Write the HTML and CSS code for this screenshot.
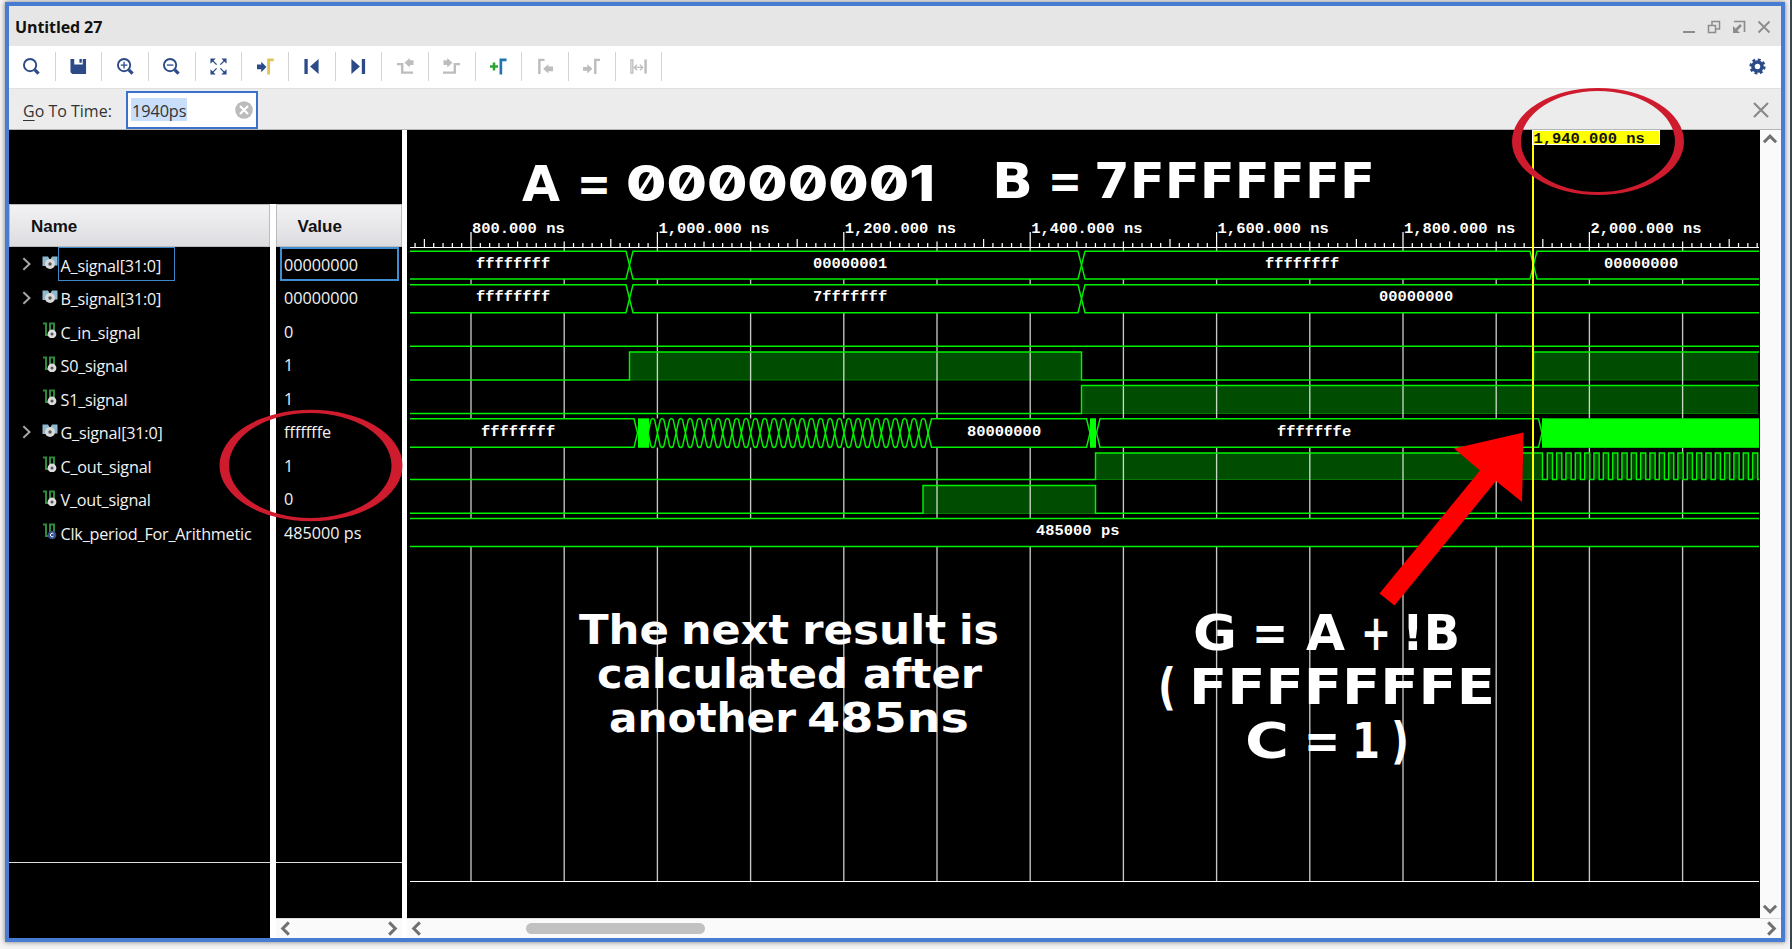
FILE: index.html
```html
<!DOCTYPE html>
<html lang="en">
<head>
<meta charset="utf-8">
<title>Untitled 27</title>
<link rel="stylesheet" href="styles.css">
</head>
<body>
<svg class="defs" aria-hidden="true">
  <symbol id="bus" viewBox="0 0 16 16">
    <path d="M.5 1.500H6L8 5l2-3.500h5.500v9h-4L8 8l-3.500 3H.5z" fill="#8fb9cf"/>
    <circle cx="8" cy="9" r="5" fill="#d9d9d9"/><circle cx="8" cy="9" r="1.700" fill="#555"/>
  </symbol>
  <symbol id="wire" viewBox="0 0 16 16">
    <path d="M1 1.500h3V13h4V1.500h4V9" fill="none" stroke="#2f8a3e" stroke-width="2"/>
    <circle cx="10" cy="12" r="4.400" fill="#dcdcdc"/><circle cx="10" cy="12" r="1.500" fill="#555"/>
  </symbol>
  <symbol id="const" viewBox="0 0 16 16">
    <path d="M1 1.500h3V13h4V1.500h4V9" fill="none" stroke="#2f8a3e" stroke-width="2"/>
    <circle cx="10" cy="12" r="4.300" fill="#34508c"/><path d="M11.500 10.800a1.800 1.800 0 1 0 0 2.400" fill="none" stroke="#fff" stroke-width="1"/>
  </symbol>
  <symbol id="chev" viewBox="0 0 16 16"><path d="M5 1.500l6.500 6.500L5 14.500" fill="none" stroke="currentColor" stroke-width="3.200"/></symbol>
  <symbol id="exp" viewBox="0 0 16 16"><path d="M5 1.500l7 6.500-7 6.500" fill="none" stroke="currentColor" stroke-width="2.200"/></symbol>
</svg>

<div class="window">
  <header class="titlebar">
    <span class="title">Untitled 27</span>
    <div class="controls">
      <svg viewBox="0 0 14 14"><path d="M1 12h12" stroke-width="2"/></svg>
      <svg viewBox="0 0 14 14"><path d="M1.500 5.500h7v7h-7zM5 5V1.500h7.500V9H9" stroke-width="1.500"/></svg>
      <svg viewBox="0 0 14 14"><path d="M2 1.500h10.500V12" stroke-width="1.700"/><path d="M9 5L4 10" stroke-width="2.600"/><path d="M1 6v7h7z" fill="#8c8c8c" stroke="none"/></svg>
      <svg viewBox="0 0 14 14"><path d="M1.500 1.500l11 11M12.500 1.500l-11 11" stroke-width="1.900"/></svg>
    </div>
  </header>

  <nav class="toolbar">
    <div class="tool"><svg viewBox="0 0 18 18"><circle cx="7.500" cy="7.500" r="6.500" class="s"/><path d="M12.500 12.500l4 4" class="s w3"/></svg></div>
    <div class="tool"><svg viewBox="0 0 18 18"><path d="M.5 1h4v6h9V1H17v16H2.500L.5 15z" class="f"/><path d="M10 1h2.500v4H10z" class="f"/></svg></div>
    <div class="tool"><svg viewBox="0 0 18 18"><circle cx="7.500" cy="7.500" r="6.500" class="s"/><path d="M4 7.500h7M7.500 4v7" class="s t"/><path d="M12.500 12.500l4 4" class="s w3"/></svg></div>
    <div class="tool"><svg viewBox="0 0 18 18"><circle cx="7.500" cy="7.500" r="6.500" class="s"/><path d="M4 7.500h7" class="s t"/><path d="M12.500 12.500l4 4" class="s w3"/></svg></div>
    <div class="tool"><svg viewBox="0 0 18 18"><path d="M.5.500h5.500l-5.500 5.500zM17.500.500v5.500L12 .5zM.5 17.500V12L6 17.500zM17.500 17.500H12l5.500-5.500z" class="f"/><path d="M2 2l5 5M16 2l-5 5M2 16l5-5M16 16l-5-5" class="s t"/></svg></div>
    <div class="tool"><svg viewBox="0 0 18 18"><path d="M0 7h4.500V4l5.500 5.500L4.500 15v-3H0z" class="f"/><path d="M12.300 17.500V2h5.500" fill="none" stroke="#e0c455" stroke-width="3"/></svg></div>
    <div class="tool"><svg viewBox="0 0 18 18"><path d="M1.500 1H5v16H1.500zM16.500 1v16l-9-8z" class="f"/></svg></div>
    <div class="tool"><svg viewBox="0 0 18 18"><path d="M12.500 1H16v16h-3.500zM1.500 1v16l9-8z" class="f"/></svg></div>
    <div class="tool off"><svg viewBox="0 0 18 18"><path d="M0 6.500h5.500v9H17" class="s w2"/><path d="M17.500 7.500h-4v2.500L8 5l5.500-5v2.500h4z" class="f"/></svg></div>
    <div class="tool off"><svg viewBox="0 0 18 18"><path d="M0 15.500h12.500v-9H18" class="s w2"/><path d="M.5 7.500h4v2.500L10 5 4.500 0v2.500h-4z" class="f"/></svg></div>
    <div class="tool"><svg viewBox="0 0 18 18"><path d="M0 9h8.500M4.250 4.750v8.500" fill="none" stroke="#2aa52f" stroke-width="2.700"/><path d="M11.500 17.500V2h6" fill="none" stroke="#1f74ad" stroke-width="2.800"/></svg></div>
    <div class="tool off"><svg viewBox="0 0 18 18"><path d="M2.500 17V2H8" class="s w2"/><path d="M17 9h-5V6.500l-5.500 5 5.500 5V14h5z" class="f"/></svg></div>
    <div class="tool off"><svg viewBox="0 0 18 18"><path d="M13 17V2h5" class="s w2"/><path d="M0 9.500h4.500v-3l5.500 5-5.500 5v-3H0z" class="f"/></svg></div>
    <div class="tool off"><svg viewBox="0 0 18 18"><path d="M1 2v14h2V2z" class="s t"/><path d="M16.500 1.500v15" class="s w2"/><path d="M4.500 10h9M7.500 7l-3 3 3 3M10.500 7l3 3-3 3" class="s t"/></svg></div>
    <svg class="gear" viewBox="0 0 18 18"><circle cx="9" cy="9" r="7.300" fill="none" stroke="#2b4a87" stroke-width="2.600" stroke-dasharray="3.100 2.633"/><circle cx="9" cy="9" r="4.800" fill="none" stroke="#2b4a87" stroke-width="3.800"/></svg>
  </nav>

  <div class="gotobar">
    <label class="goto-label"><u>G</u>o To Time:</label>
    <div class="goto-input"><span class="sel">1940ps</span>
      <svg viewBox="0 0 18 18"><circle cx="9" cy="9" r="8.800" fill="#bcbcbc"/><path d="M5 5l8 8M13 5l-8 8" stroke="#fff" stroke-width="2.200"/></svg></div>
    <svg class="goto-close" viewBox="0 0 16 16"><path d="M1 1l14 14M15 1L1 15" stroke="#8a8a8a" stroke-width="2.200"/></svg>
  </div>

  <main class="content">
    <section class="signals">
      <div class="void"></div>
      <div class="columns">
        <div class="col names">
          <div class="head">Name</div>
          <ul class="rows">
            <li><svg class="exp"><use href="#exp"/></svg><svg class="ic"><use href="#bus"/></svg><span class="nm focus">A_signal[31:0]</span></li>
            <li><svg class="exp"><use href="#exp"/></svg><svg class="ic"><use href="#bus"/></svg><span class="nm">B_signal[31:0]</span></li>
            <li><i class="exp"></i><svg class="ic"><use href="#wire"/></svg><span class="nm">C_in_signal</span></li>
            <li><i class="exp"></i><svg class="ic"><use href="#wire"/></svg><span class="nm">S0_signal</span></li>
            <li><i class="exp"></i><svg class="ic"><use href="#wire"/></svg><span class="nm">S1_signal</span></li>
            <li><svg class="exp"><use href="#exp"/></svg><svg class="ic"><use href="#bus"/></svg><span class="nm">G_signal[31:0]</span></li>
            <li><i class="exp"></i><svg class="ic"><use href="#wire"/></svg><span class="nm">C_out_signal</span></li>
            <li><i class="exp"></i><svg class="ic"><use href="#wire"/></svg><span class="nm">V_out_signal</span></li>
            <li><i class="exp"></i><svg class="ic"><use href="#const"/></svg><span class="nm">Clk_period_For_Arithmetic</span></li>
          </ul>
          <div class="rest"></div>
        </div>
        <div class="col values">
          <div class="head">Value</div>
          <ul class="rows">
            <li class="focus">00000000</li><li>00000000</li><li>0</li><li>1</li><li>1</li><li>fffffffe</li><li>1</li><li>0</li><li>485000 ps</li>
          </ul>
          <div class="rest"></div>
          <div class="hscroll"><svg class="flip"><use href="#chev"/></svg><svg><use href="#chev"/></svg></div>
        </div>
      </div>
    </section>
    <section class="wavepane">
      <div class="waverow">
        <svg id="wave" class="wave" viewBox="407 130 1353 788"></svg>
        <div class="vscroll"><svg class="up"><use href="#chev"/></svg><svg class="down"><use href="#chev"/></svg></div>
      </div>
      <div class="hscroll"><svg class="flip"><use href="#chev"/></svg><span class="thumb"></span><svg><use href="#chev"/></svg></div>
    </section>
  </main>
</div>
<div class="edge"></div>

<svg class="notes" viewBox="0 0 1792 949">
  <g class="big">
    <text y="201"><tspan x="522" textLength="38" lengthAdjust="spacingAndGlyphs">A</tspan><tspan x="577" textLength="34" lengthAdjust="spacingAndGlyphs">=</tspan><tspan class="slashed" x="626" textLength="309" lengthAdjust="spacingAndGlyphs">00000001</tspan></text>
    <text y="197.500"><tspan x="992" textLength="41" lengthAdjust="spacingAndGlyphs">B</tspan><tspan x="1048" textLength="34" lengthAdjust="spacingAndGlyphs">=</tspan><tspan x="1094" textLength="281" lengthAdjust="spacingAndGlyphs">7FFFFFFF</tspan></text>
  </g>
  <g class="mid">
    <text y="644"><tspan x="579" textLength="90" lengthAdjust="spacingAndGlyphs">The</tspan><tspan x="681" textLength="108" lengthAdjust="spacingAndGlyphs">next</tspan><tspan x="802" textLength="144" lengthAdjust="spacingAndGlyphs">result</tspan><tspan x="959" textLength="40" lengthAdjust="spacingAndGlyphs">is</tspan></text>
    <text y="688"><tspan x="597" textLength="251" lengthAdjust="spacingAndGlyphs">calculated</tspan><tspan x="863" textLength="119" lengthAdjust="spacingAndGlyphs">after</tspan></text>
    <text y="732"><tspan x="609" textLength="187" lengthAdjust="spacingAndGlyphs">another</tspan><tspan x="807" textLength="162" lengthAdjust="spacingAndGlyphs">485ns</tspan></text>
  </g>
  <g class="big g">
    <text y="649.500"><tspan x="1193" textLength="44" lengthAdjust="spacingAndGlyphs">G</tspan><tspan x="1252" textLength="36" lengthAdjust="spacingAndGlyphs">=</tspan><tspan x="1306" textLength="39" lengthAdjust="spacingAndGlyphs">A</tspan><tspan x="1361" textLength="30" lengthAdjust="spacingAndGlyphs">+</tspan><tspan x="1402" textLength="58" lengthAdjust="spacingAndGlyphs">!B</tspan></text>
    <text y="704"><tspan x="1158" textLength="18" lengthAdjust="spacingAndGlyphs">(</tspan><tspan x="1189" textLength="306" lengthAdjust="spacingAndGlyphs">FFFFFFFE</tspan></text>
    <text y="758"><tspan x="1245" textLength="44" lengthAdjust="spacingAndGlyphs">C</tspan><tspan x="1304" textLength="36" lengthAdjust="spacingAndGlyphs">=</tspan><tspan x="1352" textLength="28" lengthAdjust="spacingAndGlyphs">1</tspan><tspan x="1391" textLength="18" lengthAdjust="spacingAndGlyphs">)</tspan></text>
  </g>
  <path class="ring" d="M1512 141.500a86 53.500 0 1 0 172 0a86 53.500 0 1 0-172 0zM1521 141.500a77 50.500 0 1 0 154 0a77 50.500 0 1 0-154 0z"/>
  <path class="ring" d="M219.500 465.500a91.500 55.800 0 1 0 183 0a91.500 55.800 0 1 0-183 0zM229 465.500a81.250 52.500 0 1 0 162.500 0a81.250 52.500 0 1 0-162.500 0z"/>
  <path class="arrow" d="M1523.500 432.500L1454 448.500l26 22-100.500 123 15 12L1496 481l26 21z"/>
</svg>
<script src="wave.js"></script>
</body>
</html>
```
FILE: styles.css
```css
* { box-sizing: border-box; }
body { margin: 0; width: 1792px; height: 949px; padding: 2px 0 0 5px; overflow: hidden; position: relative;
  background: #f4f4f4; font-family: "Open Sans", "Noto Sans", sans-serif; color: #111; }
.defs { position: absolute; width: 0; height: 0; }
.window { width: 1779.500px; height: 940px; border: 4px solid #477cd0; display: flex; flex-direction: column;
  box-shadow: 0 0 5px #777; background: #fff; }
.edge { position: absolute; right: 0; top: 0; width: 2px; height: 949px; background: #3a4552; }

.titlebar { flex: 0 0 39.500px; background: #e6e6e6; display: flex; align-items: center; justify-content: space-between; padding: 2px 10px 0 6px; }
.title { font-weight: 700; font-size: 16px; letter-spacing: -.1px; }
.controls { display: flex; gap: 11px; }
.controls svg { width: 14px; height: 14px; fill: none; stroke: #8c8c8c; }

.toolbar { flex: 0 0 43px; display: flex; align-items: center; position: relative; border-bottom: 1px solid #e0e0e0; }
.tool { width: 46.670px; height: 29px; border-right: 1.500px solid #d4d4d4; display: flex; align-items: center; justify-content: center; }
.tool svg { width: 17px; height: 17px; overflow: visible; }
.s { fill: none; stroke: #2b4a87; stroke-width: 2; }
.f { fill: #2b4a87; }
.s.t { stroke-width: 1.400; }
.s.w2 { stroke-width: 2.600; }
.s.w3 { stroke-width: 3.400; }
.off .s { stroke: #bdbdbd; }
.off .f { fill: #bdbdbd; }
.gear { width: 17px; height: 17px; margin-left: auto; margin-right: 15px; }

.gotobar { flex: 0 0 41.500px; background: #ececec; border-bottom: 1px solid #b5b5b5; display: flex; align-items: center; padding-right: 12px; font-size: 16px; }
.goto-label { width: 117px; padding: 5px 0 0 14px; white-space: nowrap; color: #333; }
.goto-label u { text-underline-offset: 3px; }
.goto-input { width: 132px; height: 38px; margin-top: 2px; border: 2px solid #3b70cb; background: #fff; display: flex; align-items: center; justify-content: space-between; padding: 0 3px 0 3px; }
.goto-input svg { width: 18px; height: 18px; }
.sel { background: #c9defa; height: 23px; line-height: 26px; padding: 0 1px; font-size: 16.300px; letter-spacing: -.1px; color: #333; }
.goto-close { width: 16px; height: 16px; margin: 2px 0 0 auto; }

.content { flex: 1; display: flex; min-height: 0; }
.signals { width: 393px; display: flex; flex-direction: column; margin-right: 5px; }
.void { flex: 0 0 74px; background: #000; }
.columns { flex: 1; display: flex; gap: 6px; background: #fff; }
.col { display: flex; flex-direction: column; background: #000; }
.names { width: 261px; }
.values { width: 126px; }
.head { height: 43px; background: linear-gradient(#f2f2f4, #dddde1); border: 1px solid #bbb; font: 700 17px/43px "Liberation Sans", Arial, sans-serif; padding-left: 21px; }
.values .head { padding-left: 20.500px; }
.rows { list-style: none; margin: 0; padding: 0; height: 615px; color: #f2f2f2; font-size: 16.200px; }
.names .rows { letter-spacing: -.22px; }
.rows li { height: 33.500px; display: flex; align-items: center; }
.exp { width: 14px; height: 14px; margin: 1px 0 0 10px; color: #a8a8a8; flex: none; }
.ic { width: 16px; height: 16px; margin: 1px 0 2px 8.500px; flex: none; }
.nm { padding-left: 2px; white-space: nowrap; border: 1px solid transparent; height: 34px; line-height: 36px; }
.nm.focus { width: 117px; border-color: #3d88c8; }
.values li { padding: 3px 0 0 8px; line-height: 35px; }
.values li.focus { border: 2px solid #3d8fd2; margin: 0 3px 0 4px; padding: 3px 0 0 2px; }
.rest { flex: 1; border-top: 1.500px solid #ddd; }
.hscroll { flex: 0 0 20px; background: #fafafa; border-top: 1px solid #ddd; display: flex; align-items: center; justify-content: space-between; padding: 0 2px; color: #707070; }
.hscroll svg, .vscroll svg { width: 16px; height: 15px; }
.flip { transform: scaleX(-1); }

.wavepane { flex: 1; display: flex; flex-direction: column; }
.waverow { flex: 1; display: flex; }
.wave { width: 1353px; height: 788px; background: #000; }
.vscroll { flex: 1; background: #fafafa; display: flex; flex-direction: column; justify-content: space-between; align-items: center; padding: 2px 0; color: #707070; }
.up { transform: rotate(-90deg); }
.down { transform: rotate(90deg); }
.wavepane .hscroll { padding-right: 2px; }
.thumb { width: 179px; height: 11px; border-radius: 6px; background: #c1c1c1; margin-left: 101px; margin-right: auto; }

.grid { stroke: #fff; stroke-opacity: .78; stroke-width: 1.350; }
.tick { stroke: #fff; stroke-width: 1.250; }
.axis { stroke: #fff; stroke-width: 1; }
.line { fill: none; stroke: #00f200; stroke-width: 1.450; }
.fill { fill: #004c00; }
.floor { stroke: #007800; stroke-width: 1; }
.solid { fill: #0f0; }
.label { fill: #fff; font: 700 15.500px "Liberation Mono", "Courier New", monospace; white-space: pre; }
.flag { fill: #ff0; stroke: #fff; stroke-width: 1; }
.cursor { stroke: #ff0; stroke-width: 2; }
.label.dark { fill: #111; }

.notes { position: absolute; left: 0; top: 0; width: 1792px; height: 949px; }
.notes text { fill: #fff; font-family: "DejaVu Sans", sans-serif; font-weight: 700; }
.notes .slashed { font-family: "Inter", sans-serif; font-weight: 800; font-feature-settings: "zero"; }
.big text { font-size: 49px; }
.big.g text { font-size: 50.500px; }
.mid text { font-size: 40.500px; }
.ring { fill: #cf1b2e; fill-rule: evenodd; }
.arrow { fill: #f00; }
```
FILE: wave.js
```js
const svg = document.getElementById('wave');
const NS = 'http://www.w3.org/2000/svg';
const PX = 0.932, L = 410, R = 1759;
const xOf = ns => 471 + (ns - 800) * PX;

function add(tag, cls, attrs, text) {
  const e = document.createElementNS(NS, tag);
  e.setAttribute('class', cls);
  for (const k in attrs) e.setAttribute(k, attrs[k]);
  if (text) e.textContent = text;
  svg.appendChild(e);
}
const line = (cls, x1, y1, x2, y2) => add('line', cls, { x1, y1, x2, y2 });
const path = (cls, d) => add('path', cls, { d });
const rect = (cls, x, y, w, h) => add('rect', cls, { x, y, width: w, height: h });
const label = (x, y, t, cls = 'label') => {
  add('text', cls, { x, y, textLength: t.length * 9.27, lengthAdjust: 'spacingAndGlyphs' }, t);
};

// level fills sit below the grid lines
const highs = [[629.5, 1081.5, 352, 380], [1534, 1758, 352, 380], [1081.5, 1758, 385.5, 413.5],
  [1095.5, 1542, 453, 479.5], [923, 1095.5, 485.5, 513.5]];
highs.forEach(([a, b, t, m]) => { rect('fill', a, t, b - a, m - t); line('floor', a, m, b, m); });

// grid
for (let ns = 800; ns <= 2100; ns += 100) {
  const x = xOf(ns);
  [[247, 251], [279, 284.5], [312.5, 418.5], [447.5, 518.5], [546.5, 881]].forEach(([a, b]) => line('grid', x, a, x, b));
}
// ruler
for (let ns = 740; ns <= 2180; ns += 10) {
  const x = xOf(ns);
  const top = ns % 200 === 0 ? 232 : ns % 200 === 150 ? 239 : ns % 50 === 0 ? 241.5 : 243;
  line('tick', x, top, x, 247);
}
line('axis', L, 247.5, R, 247.5);
line('axis', L, 881.5, R, 881.5);
['800.000 ns', '1,000.000 ns', '1,200.000 ns', '1,400.000 ns', '1,600.000 ns', '1,800.000 ns', '2,000.000 ns']
  .forEach((t, i) => label(xOf(800 + i * 200) + 1, 233, t));

// bus: spans between transition points
function bus(t, b, xs) {
  const m = (t + b) / 2;
  for (let i = 0; i < xs.length - 1; i++) {
    const [a, c] = [xs[i], xs[i + 1]];
    const l = a > L, r = c < R, w = 3.5;
    for (const y of [t, b]) {
      path('line', (l ? `M${a} ${m}L${a + w} ${y}` : `M${a} ${y}`) + (r ? `H${c - w}L${c} ${m}` : `H${c}`));
    }
  }
}
bus(251.2, 279, [L, 629.5, 1081.5, 1533.5, R]);
bus(284.7, 312.7, [L, 629.5, 1081.5, R]);
bus(518.5, 546.5, [L, R]);

// G bus with its settling region
bus(418.8, 447.2, [L, 637.5]);
rect('solid', 638, 418.3, 11, 29.5);
let up = '', dn = '';
for (let i = 0; i < 30; i++) {
  const a = 648.1 + i * 9.33, m = 433, q = a + 9.33;
  up += `M${a} ${m}L${a + 2.8} 420Q${a + 4.66} 417 ${a + 6.5} 420L${q} ${m}`;
  dn += `M${a} ${m}L${a + 2.8} 446Q${a + 4.66} 449 ${a + 6.5} 446L${q} ${m}`;
}
path('line', up + dn);
bus(418.8, 447.2, [928, 1090]);
rect('solid', 1090, 418.3, 6, 29.5);
bus(418.8, 447.2, [1096.5, 1542]);
rect('solid', 1542, 418.3, 217, 29.5);

// scalar signals
path('line', `M${L} 346.2H${R}`);
path('line', `M${L} 380H629.5V352H1081.5V380H1533.5V352H${R}`);
path('line', `M${L} 413.5H1081.5V385.5H${R}`);
let c = `M${L} 479.5H1095.5V453H1542.5V479.5`;
for (let x = 1547.3; x < 1757; x += 9.33) {
  rect('fill', x, 453, 5, 26.5);
  c += `H${x}V453H${x + 5.2}V479.5`;
}
path('line', c + `H${R}`);
path('line', `M${L} 513.2H923V485.5H1095.5V513.2H${R}`);

// bus values
[[476, 267.5, 'ffffffff'], [813, 267.5, '00000001'], [1265, 267.5, 'ffffffff'], [1604, 267.5, '00000000'],
 [476, 301, 'ffffffff'], [813, 301, '7fffffff'], [1379, 301, '00000000'],
 [481, 435.5, 'ffffffff'], [967, 435.5, '80000000'], [1277, 435.5, 'fffffffe'], [1036, 535, '485000 ps']]
  .forEach(([x, y, t]) => label(x, y, t));

// cursor
line('cursor', 1533, 130, 1533, 881);
rect('flag', 1532.5, 130.5, 127, 14);
label(1533.5, 143, '1,940.000 ns', 'label dark');
```
